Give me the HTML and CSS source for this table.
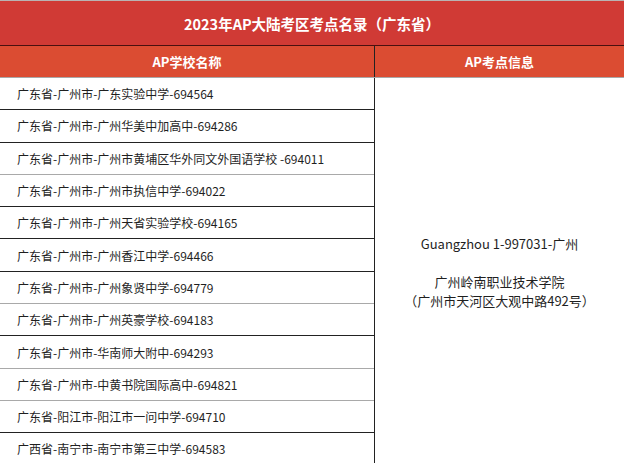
FILE: index.html
```html
<!DOCTYPE html>
<html lang="zh-CN">
<head>
<meta charset="utf-8">
<title>2023年AP大陆考区考点名录（广东省）</title>
<link rel="stylesheet" href="styles.css">
</head>
<body>
<div class="sheet">
  <div class="title">2023年AP大陆考区考点名录（广东省）</div>
  <div class="head">
    <div class="hcell">AP学校名称</div>
    <div class="hcell hright">AP考点信息</div>
  </div>
  <div class="body">
    <div class="list">
      <div class="row">广东省-广州市-广东实验中学-694564</div>
      <div class="row">广东省-广州市-广州华美中加高中-694286</div>
      <div class="row light">广东省-广州市-广州市黄埔区华外同文外国语学校 -694011</div>
      <div class="row">广东省-广州市-广州市执信中学-694022</div>
      <div class="row">广东省-广州市-广州天省实验学校-694165</div>
      <div class="row">广东省-广州市-广州香江中学-694466</div>
      <div class="row light">广东省-广州市-广州象贤中学-694779</div>
      <div class="row">广东省-广州市-广州英豪学校-694183</div>
      <div class="row light">广东省-广州市-华南师大附中-694293</div>
      <div class="row light">广东省-广州市-中黄书院国际高中-694821</div>
      <div class="row">广东省-阳江市-阳江市一问中学-694710</div>
      <div class="row">广西省-南宁市-南宁市第三中学-694583</div>
    </div>
    <div class="info">
      <p>Guangzhou 1-997031-广州</p>
      <p class="gap">广州岭南职业技术学院</p>
      <p>（广州市天河区大观中路492号）</p>
    </div>
  </div>
</div>
</body>
</html>
```

FILE: styles.css
```css
html, body {
  margin: 0;
  padding: 0;
  background: #ffffff;
}

body {
  font-family: "Noto Sans CJK SC", "Noto Sans", sans-serif;
  color: #1f1f1f;
  overflow: hidden;
}

.sheet {
  width: 624px;
}

.title {
  height: 44px;
  border-top: 1px solid #b9b3b3;
  border-bottom: 1px solid #4a1010;
  background: #d03a35;
  color: #ffffff;
  font-weight: 700;
  font-size: 14.5px;
  display: flex;
  align-items: center;
  justify-content: center;
}

.head {
  display: grid;
  grid-template-columns: 374px 1fr;
  height: 31px;
  background: #db4c32;
  border-bottom: 1px solid #a8a8a8;
}

.hcell {
  display: flex;
  align-items: center;
  justify-content: center;
  color: #ffffff;
  font-weight: 700;
  font-size: 13px;
}

.hright {
  border-left: 1px solid #222222;
}

.body {
  display: grid;
  grid-template-columns: 374px 1fr;
}

.list {
  display: flex;
  flex-direction: column;
}

.row {
  height: 31.3px;
  border-bottom: 1px solid #222222;
  display: flex;
  align-items: center;
  padding-left: 17px;
  font-size: 12px;
  white-space: pre;
}

.row.light {
  border-bottom-color: #a9a9a9;
}

.info {
  border-left: 1px solid #222222;
  display: flex;
  flex-direction: column;
  align-items: center;
  justify-content: center;
  font-size: 13px;
  line-height: 19px;
  text-align: center;
}

.info p {
  margin: 0;
}

.info .gap {
  margin-top: 19px;
}
```
